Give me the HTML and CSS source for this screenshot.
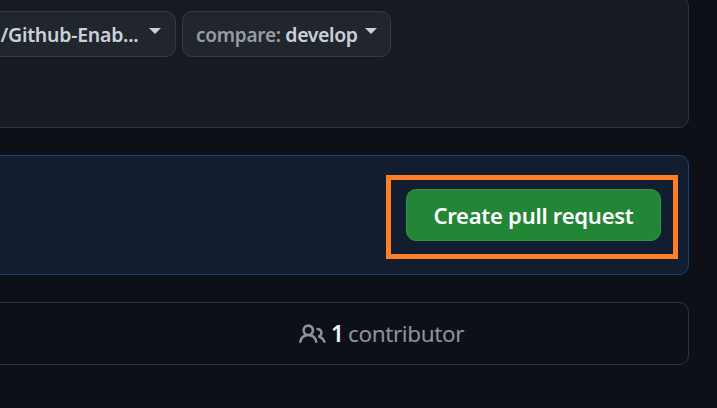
FILE: index.html
```html
<!DOCTYPE html>
<html lang="en">
<head>
<meta charset="utf-8">
<title>Comparing changes</title>
<link rel="stylesheet" href="styles.css">
</head>
<body>
<main class="page">
  <section class="range">
    <button class="select select-repo"><span class="repo-name">/Github-Enab...</span><span class="caret"></span></button>
    <button class="select select-compare"><span class="label">compare:</span><span class="branch">develop</span><span class="caret"></span></button>
  </section>
  <section class="notice">
    <div class="highlight">
      <button class="create"><span>Create pull request</span></button>
    </div>
  </section>
  <section class="stats">
    <svg class="people" viewBox="0 0 16 16" aria-hidden="true"><path d="M2 5.5a3.5 3.5 0 1 1 5.898 2.549 5.508 5.508 0 0 1 3.034 4.084.75.75 0 1 1-1.482.235 4 4 0 0 0-7.9 0 .75.75 0 0 1-1.482-.236A5.507 5.507 0 0 1 3.102 8.05 3.493 3.493 0 0 1 2 5.5ZM11 4a3.001 3.001 0 0 1 2.22 5.018 5.01 5.01 0 0 1 2.56 3.012.749.749 0 0 1-.885.954.752.752 0 0 1-.549-.514 3.507 3.507 0 0 0-2.522-2.372.75.75 0 0 1-.574-.73v-.352a.75.75 0 0 1 .416-.672A1.5 1.5 0 0 0 11 5.5.75.75 0 0 1 11 4Zm-5.5-.5a2 2 0 1 0-.001 3.999A2 2 0 0 0 5.5 3.5Z"/></svg>
    <strong class="count">1</strong><span class="contributor">contributor</span>
  </section>
</main>
</body>
</html>
```
FILE: styles.css
```css
* { box-sizing: border-box; }
body { margin: 0; background: #0d1117; overflow: hidden; font-family: "Noto Sans", "Open Sans", sans-serif; }
button { font-family: inherit; margin: 0; }
.page { width: 717px; height: 408px; overflow: hidden; padding-right: 28px; }
.range, .notice, .stats { margin-left: -12px; border: 1px solid #30363d; border-radius: 10px; display: flex; }
.range { height: 132px; margin-top: -4px; padding: 14px 0 0 0; gap: 6px; background: #161b22; align-items: flex-start; }
.select { height: 46px; border: 1px solid #363b42; border-radius: 10px; background: #21262d; color: #c9d1d9; display: flex; align-items: center; padding: 2px 0 0; font-size: 19.5px; font-weight: 600; line-height: 28px; white-space: nowrap; }
.select-repo { width: 187px; padding-left: 10px; }
.select-compare { width: 209px; padding-left: 13px; }
.repo-name { width: 139px; letter-spacing: -0.25px; }
.label { width: 84px; margin-right: 5px; color: #979ca4; font-size: 19px; letter-spacing: -0.25px; }
.branch { width: 73px; letter-spacing: -0.4px; }
.caret { width: 0; height: 0; border: 6px solid transparent; border-top-color: #c9d1d9; border-bottom: 0; margin: -8px 0 0 10px; }
.select-compare .caret { margin-left: 7px; }
.notice { height: 120px; margin-top: 27px; background: #121d2f; border-color: #1e4273; justify-content: flex-end; padding: 19px 10px 0 0; }
.highlight { width: 292px; height: 84px; border: 5px solid #ff7f27; padding: 9px 12px 0 15px; }
.create { width: 255px; height: 52px; border: 1px solid #38914a; border-radius: 10px; background: #238636; color: #fff; font-size: 22px; font-weight: 600; line-height: 30px; padding: 0; white-space: nowrap; letter-spacing: -0.25px; }
.stats { height: 63px; margin-top: 27px; align-items: center; padding-left: 310px; color: #8b949e; font-size: 22.5px; line-height: 32px; white-space: nowrap; }
.people { width: 27px; height: 27px; fill: currentColor; margin: 1px 5px 0 0; }
.count { width: 12px; margin-right: 5px; color: #f0f6fc; font-weight: 600; }
.contributor { letter-spacing: -0.38px; }
```
